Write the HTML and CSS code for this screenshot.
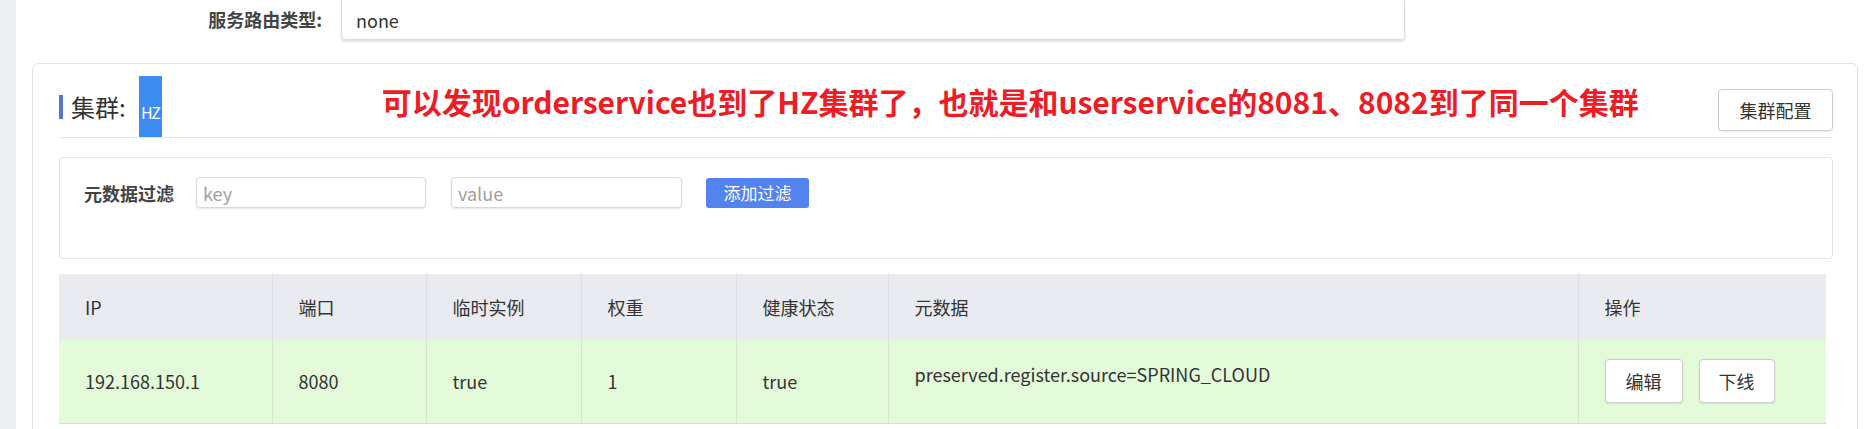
FILE: index.html
```html
<!DOCTYPE html>
<html lang="zh-CN">
<head>
<meta charset="utf-8">
<title>集群</title>
<link rel="stylesheet" href="styles.css">
</head>
<body>
<div class="page">
  <div class="strip"></div>
  <div class="main">
    <div class="form-row">
      <div class="form-label">服务路由类型:</div>
      <div class="form-input"><span>none</span></div>
    </div>

    <div class="card">
      <div class="card-head">
        <span class="bar"></span>
        <span class="title">集群:</span>
        <span class="hz">HZ</span>
        <span class="note">可以发现orderservice也到了HZ集群了，也就是和userservice的8081、8082到了同一个集群</span>
        <button class="btn btn-config">集群配置</button>
      </div>

      <div class="filter">
        <div class="filter-row">
          <span class="filter-label">元数据过滤</span>
          <div class="fake-input key"><span class="ph">key</span></div>
          <div class="fake-input value"><span class="ph">value</span></div>
          <button class="btn-primary">添加过滤</button>
        </div>
      </div>

      <table class="grid">
        <colgroup>
          <col class="c-ip"><col class="c-port"><col class="c-eph"><col class="c-weight"><col class="c-health"><col class="c-meta"><col class="c-ops">
        </colgroup>
        <thead>
          <tr>
            <th>IP</th><th>端口</th><th>临时实例</th><th>权重</th><th>健康状态</th><th>元数据</th><th>操作</th>
          </tr>
        </thead>
        <tbody>
          <tr>
            <td>192.168.150.1</td>
            <td>8080</td>
            <td>true</td>
            <td>1</td>
            <td>true</td>
            <td class="meta">preserved.register.source=SPRING_CLOUD</td>
            <td class="ops"><button class="btn btn-row">编辑</button><button class="btn btn-row btn-off">下线</button></td>
          </tr>
        </tbody>
      </table>
    </div>
  </div>
</div>
</body>
</html>
```

FILE: styles.css
```css
* { box-sizing: border-box; }

html, body {
  margin: 0;
  padding: 0;
  background: #ffffff;
}

body {
  width: 1871px;
  height: 429px;
  overflow: hidden;
  font-family: "Noto Sans CJK SC", "Noto Sans", "Liberation Sans", sans-serif;
  color: #333333;
}

.page {
  display: flex;
  height: 429px;
  overflow: hidden;
}

.strip {
  flex: none;
  width: 16px;
  background: #edeff3;
}

.main {
  flex: 1;
  padding: 0 13px 0 16px;
}

/* top form row */
.form-row {
  display: flex;
  align-items: center;
  height: 43px;
  margin-top: -3px;
}

.form-label {
  width: 290px;
  text-align: right;
  font-size: 18px;
  font-weight: 700;
  color: #444444;
  margin-right: 19px;
}

.form-input {
  width: 1064px;
  height: 43px;
  border: 1px solid #dcdcdc;
  border-radius: 4px;
  box-shadow: 0 2px 2px rgba(0, 0, 0, 0.12);
  display: flex;
  align-items: center;
  padding: 3px 14px 0;
  font-size: 18px;
  color: #333333;
}

/* card */
.card {
  margin-top: 23px;
  border: 1px solid #e4e4e4;
  border-radius: 6px;
  background: #ffffff;
  padding: 0 24px 40px 26px;
}

.card-head {
  display: flex;
  align-items: center;
  height: 74px;
  padding-top: 12px;
  border-bottom: 1px solid #e6e6e6;
}

.bar {
  flex: none;
  width: 4px;
  height: 24px;
  background: #5574d0;
  margin-right: 8px;
}

.title {
  font-size: 24px;
  color: #333333;
  line-height: 1;
}

.hz {
  flex: none;
  align-self: stretch;
  width: 23px;
  margin-left: 13px;
  background: #3c8cf2;
  color: #ffffff;
  font-size: 16px;
  letter-spacing: -1.5px;
  display: flex;
  align-items: center;
  justify-content: center;
  padding-top: 10px;
  overflow: hidden;
}

.note {
  margin-left: 220px;
  margin-bottom: 12px;
  color: #ee1c25;
  font-weight: 700;
  font-size: 30px;
  white-space: nowrap;
  line-height: 1.2;
}

.btn {
  font-family: inherit;
  background: #ffffff;
  border: 1px solid #cccccc;
  border-radius: 4px;
  color: #333333;
  font-size: 18px;
  padding: 0;
  cursor: pointer;
}

.btn-config {
  margin-left: auto;
  width: 115px;
  height: 42px;
  margin-top: 7px;
  box-shadow: 0 1px 2px rgba(0, 0, 0, 0.08);
}

/* filter box */
.filter {
  margin-top: 19px;
  height: 102px;
  border: 1px solid #e3e3e3;
  border-radius: 4px;
  padding: 19px 24px 0;
}

.filter-row {
  display: flex;
  align-items: center;
  height: 31px;
}

.filter-label {
  width: 93px;
  font-size: 18px;
  font-weight: 700;
  color: #444444;
  white-space: nowrap;
  margin-right: 19px;
}

.fake-input {
  height: 31px;
  border: 1px solid #d9d9d9;
  border-radius: 4px;
  box-shadow: 0 1px 2px rgba(0, 0, 0, 0.1);
  display: flex;
  align-items: center;
  padding-left: 6px;
  font-size: 18px;
}

.fake-input.key { width: 230px; margin-right: 25px; }
.fake-input.value { width: 231px; margin-right: 24px; }

.ph { color: #a0a0a0; }

.btn-primary {
  font-family: inherit;
  width: 103px;
  height: 30px;
  border: none;
  border-radius: 3px;
  background: #5283f0;
  color: #ffffff;
  font-size: 17px;
  padding: 0;
}

/* table */
.grid {
  margin-top: 15px;
  width: 1767px;
  border-collapse: collapse;
  table-layout: fixed;
  font-size: 18px;
}

.c-ip { width: 213px; }
.c-port { width: 154px; }
.c-eph { width: 155px; }
.c-weight { width: 155px; }
.c-health { width: 152px; }
.c-meta { width: 690px; }
.c-ops { width: 248px; }

.grid th {
  height: 66px;
  background: #e9ebf1;
  font-weight: 400;
  text-align: left;
  padding: 0 0 0 26px;
  color: #333333;
  border-left: 1px solid #dde0e6;
}

.grid td {
  height: 83px;
  background: #e3fbd9;
  padding: 0 0 0 26px;
  color: #333333;
  border-left: 1px solid #d3e5cd;
  border-bottom: 1px solid #dadada;
}

.grid th:first-child,
.grid td:first-child { border-left: none; }

.grid td.meta {
  vertical-align: top;
  padding-top: 21px;
}

.ops {
  white-space: nowrap;
}

.btn-row {
  width: 78px;
  height: 44px;
  box-shadow: 0 1px 2px rgba(0, 0, 0, 0.1);
}

.btn-off {
  width: 76px;
  margin-left: 16px;
}
```
